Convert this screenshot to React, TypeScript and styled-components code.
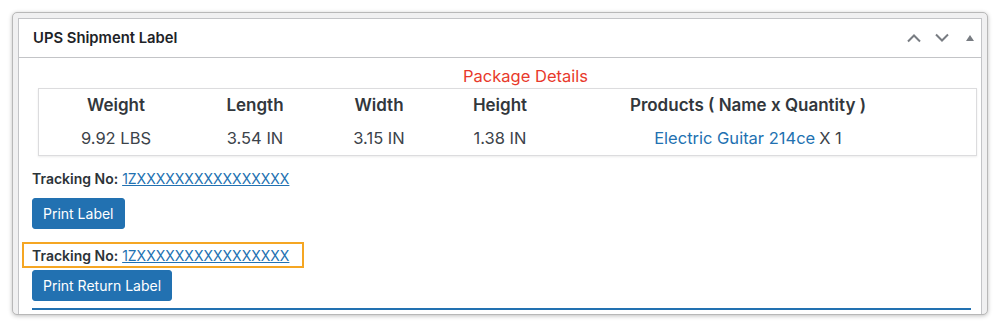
import React, { FC } from 'react';
import styled, { createGlobalStyle } from 'styled-components';

const GlobalStyle = createGlobalStyle`
  html, body {
    margin: 0;
    padding: 0;
    background: #ffffff;
  }
  body {
    font-family: Inter, "Liberation Sans", sans-serif;
    color: #3c434a;
  }
`;

const packages = [
  { weight: '9.92 LBS', length: '3.54 IN', width: '3.15 IN', height: '1.38 IN', product: 'Electric Guitar 214ce', qty: 1 },
];

const trackingNo = '1ZXXXXXXXXXXXXXXXX';

const App: FC = () => (
  <>
    <GlobalStyle />
    <Page>
      <Frame>
        <Postbox>
          <Header>
            <Title>UPS Shipment Label</Title>
            <Handles>
              <HandleButton aria-label="Move up">
                <svg width="16" height="10" viewBox="0 0 16 10">
                  <path d="M2 8.5 L8 2.5 L14 8.5" fill="none" stroke="#787c82" strokeWidth="2" />
                </svg>
              </HandleButton>
              <HandleButton aria-label="Move down">
                <svg width="16" height="10" viewBox="0 0 16 10">
                  <path d="M2 1.5 L8 7.5 L14 1.5" fill="none" stroke="#787c82" strokeWidth="2" />
                </svg>
              </HandleButton>
              <HandleButton aria-label="Toggle panel">
                <svg width="10" height="8" viewBox="0 0 10 8">
                  <path d="M1 7 L5 1 L9 7 Z" fill="#787c82" />
                </svg>
              </HandleButton>
            </Handles>
          </Header>

          <Inside>
            <SectionTitle>Package Details</SectionTitle>
            <PackageTable>
              <HeadCell>Weight</HeadCell>
              <HeadCell>Length</HeadCell>
              <HeadCell>Width</HeadCell>
              <HeadCell>Height</HeadCell>
              <HeadCell>Products ( Name x Quantity )</HeadCell>
              <span />
              {packages.map((p) => (
                <React.Fragment key={p.product}>
                  <Cell>{p.weight}</Cell>
                  <Cell>{p.length}</Cell>
                  <Cell>{p.width}</Cell>
                  <Cell>{p.height}</Cell>
                  <Cell>
                    <Link href="#">{p.product}</Link> X {p.qty}
                  </Cell>
                  <span />
                </React.Fragment>
              ))}
            </PackageTable>

            <Tracking>
              <strong>Tracking No:</strong> <TrackingLink href="#">{trackingNo}</TrackingLink>
            </Tracking>
            <Button>Print Label</Button>

            <Highlighted>
              <Tracking>
                <strong>Tracking No:</strong> <TrackingLink href="#">{trackingNo}</TrackingLink>
              </Tracking>
            </Highlighted>
            <Button $tight>Print Return Label</Button>

            <Divider />
          </Inside>
        </Postbox>
      </Frame>
    </Page>
  </>
);

export default App;

const Page = styled.div`
  width: 1000px;
  height: 327px;
  padding: 12px 12px 0 12px;
  box-sizing: border-box;
  overflow: hidden;
`;

const Frame = styled.div`
  height: 303px;
  box-sizing: border-box;
  padding: 5px 5px 0 5px;
  background: #f0f0f1;
  border: 1px solid #b8b8b8;
  border-radius: 5px;
  box-shadow: 0 1px 4px rgba(0, 0, 0, 0.25);
  overflow: hidden;
`;

const Postbox = styled.div`
  height: 100%;
  background: #ffffff;
  border: 1px solid #c3c4c7;
  border-bottom: none;
  box-sizing: border-box;
`;

const Header = styled.div`
  display: flex;
  align-items: center;
  justify-content: space-between;
  height: 38px;
  padding: 0 0 0 14px;
  border-bottom: 1px solid #c3c4c7;
`;

const Title = styled.h2`
  margin: 0;
  font-size: 14.8px;
  font-weight: 600;
  color: #1d2327;
`;

const Handles = styled.div`
  display: flex;
  align-items: center;
  margin-right: -3px;
`;

const HandleButton = styled.button`
  width: 28px;
  height: 36px;
  padding: 0;
  border: none;
  background: none;
  display: flex;
  align-items: center;
  justify-content: center;
`;

const Inside = styled.div`
  padding: 8px 10px 0 13px;
`;

const SectionTitle = styled.div`
  text-align: center;
  font-size: 16.5px;
  line-height: 20px;
  color: #e8392c;
  margin-left: 48px;
`;

const PackageTable = styled.div`
  display: grid;
  grid-template-columns: 154px 124px 124px 118px 378px 1fr;
  grid-template-rows: 31px 35px;
  width: 100%;
  margin: 2px 0 0 6px;
  padding: 0;
  border: 1px solid #dcdcde;
  box-shadow: 0 1px 2px rgba(0, 0, 0, 0.08);
  box-sizing: border-box;
  background: #ffffff;
`;

const HeadCell = styled.div`
  display: flex;
  align-items: center;
  justify-content: center;
  font-size: 17px;
  font-weight: 600;
  color: #32373c;
  white-space: nowrap;
`;

const Cell = styled(HeadCell)`
  font-size: 16.5px;
  font-weight: 400;
  color: #3c434a;
`;

const Link = styled.a`
  color: #2271b1;
  text-decoration: none;
  margin-right: 4px;
`;

const Tracking = styled.p`
  margin: 13px 0 0 0;
  font-size: 14px;
  line-height: 20px;
  color: #3c434a;

  strong {
    font-weight: 600;
    color: #2c3338;
  }
`;

const TrackingLink = styled.a`
  color: #2271b1;
  text-decoration: underline;
`;

const Button = styled.button<{ $tight?: boolean }>`
  display: block;
  height: 31px;
  padding: 0 10px;
  margin: ${({ $tight }) => ($tight ? '2px' : '9px')} 0 0 0;
  font-family: inherit;
  font-size: 14px;
  color: #ffffff;
  background: #2271b1;
  border: 1px solid #2271b1;
  border-radius: 3px;
`;

const Highlighted = styled.div`
  width: fit-content;
  margin: 13px 0 0 -10px;
  padding: 2px 13px 0 8px;
  border: 2px solid #f5a623;

  p {
    margin: 0;
  }
`;

const Divider = styled.hr`
  margin: 7px 0 0 0;
  border: none;
  border-top: 2px solid #2271b1;
`;
